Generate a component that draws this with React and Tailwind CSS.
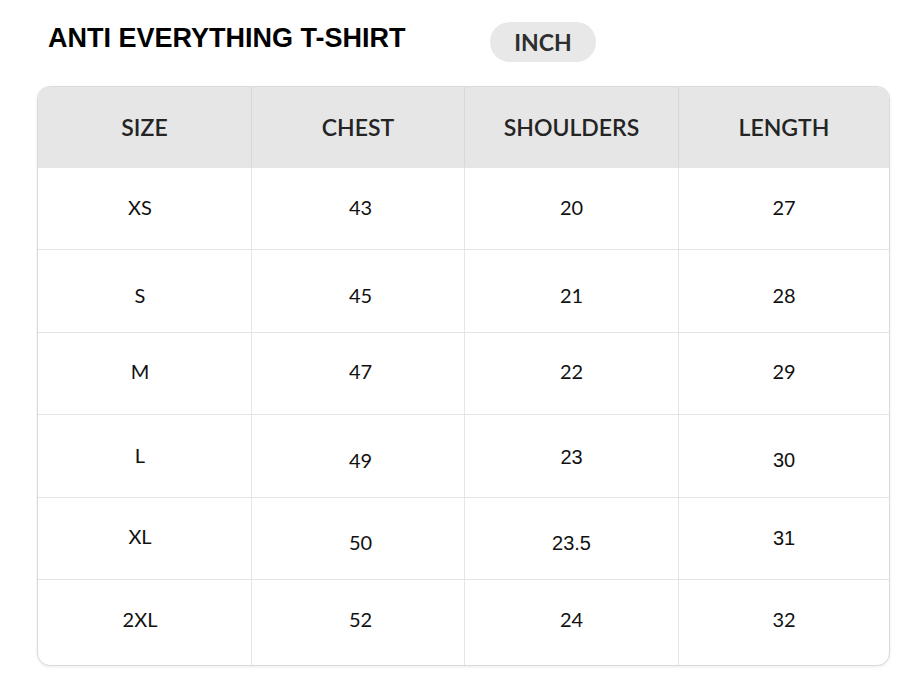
import React from "react";

const lato = "font-['Lato','Noto_Sans',sans-serif]";
const arial = "font-['Liberation_Sans',Arial,sans-serif]";

const rows = [
  {
    h: "h-[82px]",
    cells: [
      { t: "XS", p: "pb-[4px]" },
      { t: "43", p: "pb-[4px]" },
      { t: "20", p: "pb-[4px]" },
      { t: "27", p: "pb-[4px]" },
    ],
  },
  {
    h: "h-[83px]",
    cells: [
      { t: "S", p: "pt-[8px]" },
      { t: "45", p: "pt-[8px]" },
      { t: "21", p: "pt-[8px]" },
      { t: "28", p: "pt-[8px]" },
    ],
  },
  {
    h: "h-[82px]",
    cells: [
      { t: "M", p: "pb-[6px]" },
      { t: "47", p: "pb-[6px]" },
      { t: "22", p: "pb-[6px]" },
      { t: "29", p: "pb-[6px]" },
    ],
  },
  {
    h: "h-[83px]",
    cells: [
      { t: "L", p: "pb-[2px]" },
      { t: "49", p: "pt-[8px]" },
      { t: "23", p: "pt-[2px]", a: true },
      { t: "30", p: "pt-[8px]", a: true },
    ],
  },
  {
    h: "h-[82px]",
    cells: [
      { t: "XL", p: "pb-[6px]" },
      { t: "50", p: "pt-[6px]" },
      { t: "23.5", p: "pt-[8px]", a: true },
      { t: "31", p: "pb-[2px]", a: true },
    ],
  },
  {
    h: "h-[86px]",
    cells: [
      { t: "2XL", p: "pb-[7px]" },
      { t: "52", p: "pb-[7px]" },
      { t: "24", p: "pb-[7px]" },
      { t: "32", p: "pb-[7px]" },
    ],
  },
];

const colPad = ["pr-[9px]", "pl-[5px]", "", ""];
const colBorder = ["", "border-l border-[#e4e4e4]", "border-l border-[#e4e4e4]", "border-l border-[#e4e4e4]"];
const headers = ["SIZE", "CHEST", "SHOULDERS", "LENGTH"];

export default function App() {
  return (
    <div className="w-[900px] h-[690px] bg-white">
      <div className="flex items-start pt-[22px] pl-[48px]">
        <h1 className={`w-[442px] mt-[1px] text-[27px] leading-[30px] font-bold text-black ${arial}`}>
          ANTI EVERYTHING T-SHIRT
        </h1>
        <div className={`h-[40px] w-[106px] rounded-full bg-[#e8e8e8] flex items-center justify-center text-[23px] font-bold text-[#2e2e2e] ${lato}`}>
          INCH
        </div>
      </div>

      <div className="mt-[24px] ml-[37px] w-[853px] border border-[#dadada] rounded-[13px] overflow-hidden bg-white shadow-[0_1px_3px_rgba(0,0,0,0.08)]">
        <div className="grid grid-cols-[213px_213px_214px_211px] h-[80px] bg-[#e6e6e6]">
          {headers.map((h, i) => (
            <div
              key={h}
              className={`flex items-center justify-center text-[23px] font-semibold text-[#242424] ${lato} ${i > 0 ? "border-l border-[#d8d8d8]" : ""}`}
            >
              {h}
            </div>
          ))}
        </div>
        {rows.map((r, ri) => (
          <div
            key={ri}
            className={`grid grid-cols-[213px_213px_214px_211px] ${r.h} border-t border-[#e4e4e4]`}
          >
            {r.cells.map((c, ci) => (
              <div
                key={ci}
                className={`flex items-center justify-center text-[20px] text-[#111] ${c.a ? arial : lato} ${colBorder[ci]} ${colPad[ci]} ${c.p}`}
              >
                {c.t}
              </div>
            ))}
          </div>
        ))}
      </div>
    </div>
  );
}
